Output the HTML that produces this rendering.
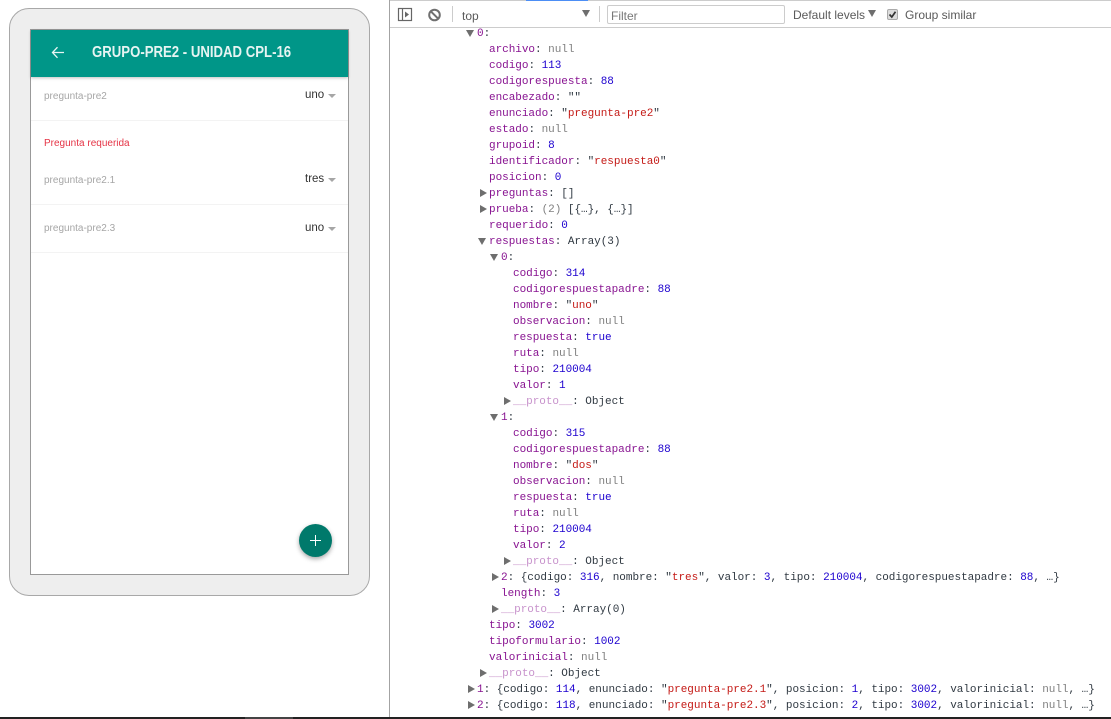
<!DOCTYPE html>
<html><head><meta charset="utf-8">
<style>
html,body{margin:0;padding:0;background:#fff;width:1111px;height:719px;overflow:hidden}
body{position:relative;font-family:"Liberation Sans",sans-serif}
.a{position:absolute}
.l{position:absolute;height:16px;line-height:16px;margin-top:1px;font-family:"Liberation Mono",monospace;font-size:11px;letter-spacing:-.03px;color:#303942;white-space:pre}
.k{color:#881391}.d{color:#c893cc}.n{color:#1c00cf}.s{color:#c41a16}.g{color:#808080}
.t{position:absolute;width:0;height:0}
.tr{border-left:7px solid #6e6e6e;border-top:4px solid transparent;border-bottom:4px solid transparent}
.td{border-top:7px solid #6e6e6e;border-left:4px solid transparent;border-right:4px solid transparent}
.q{position:absolute;left:44px;font-size:10px;color:#a6a6a6;line-height:12px;white-space:nowrap;margin-top:1px}
.v{position:absolute;font-size:11.5px;color:#333;line-height:14px;white-space:nowrap;margin-top:1px}
.c{position:absolute;left:328px;width:0;height:0;margin-top:0;border-top:4px solid #a6a6a6;border-left:4.5px solid transparent;border-right:4.5px solid transparent}
.h{position:absolute;left:31px;width:317px;height:1px;background:#f3f3f3}
.tb{position:absolute;font-size:12px;color:#5a5a5a;line-height:14px;white-space:nowrap}
</style></head>
<body>
<!-- phone -->
<div class="a" style="left:9px;top:8px;width:359px;height:586px;background:#eee;border:1px solid #a8a8a8;border-radius:20px"></div>
<div class="a" style="left:30px;top:29px;width:317px;height:544px;background:#fff;border:1px solid #999"></div>
<div class="a" style="left:31px;top:30px;width:317px;height:47px;background:#009688;box-shadow:0 1px 3px rgba(0,0,0,.25)"></div>
<svg class="a" style="left:51px;top:46px" width="14" height="14" viewBox="0 0 14 14"><path d="M13 6.500H2M6.500 1.200L1.500 6.500L6.500 11.800" fill="none" stroke="#e8f5f3" stroke-width="1.300"/></svg>
<div class="a" style="left:92px;top:44px;font-size:15.5px;font-weight:bold;color:#e6f4f2;line-height:18px;white-space:nowrap;transform-origin:0 0;transform:scaleX(.85)">GRUPO-PRE2 - UNIDAD CPL-16</div>
<div class="q" style="top:90px">pregunta-pre2</div>
<div class="v" style="left:305px;top:87px">uno</div><div class="c" style="top:94px"></div>
<div class="h" style="top:120px"></div>
<div class="a" style="left:44px;top:138px;font-size:10px;color:#e53345;line-height:12px">Pregunta requerida</div>
<div class="q" style="top:174px">pregunta-pre2.1</div>
<div class="v" style="left:305px;top:171px">tres</div><div class="c" style="top:178px"></div>
<div class="h" style="top:204px"></div>
<div class="q" style="top:222px">pregunta-pre2.3</div>
<div class="v" style="left:305px;top:220px">uno</div><div class="c" style="top:227px"></div>
<div class="h" style="top:252px"></div>
<div class="a" style="left:299px;top:524px;width:33px;height:33px;border-radius:50%;background:#00796b;box-shadow:0 2px 5px rgba(0,0,0,.35)"></div>
<div class="a" style="left:310px;top:540px;width:11px;height:1.4px;background:#fff"></div>
<div class="a" style="left:315px;top:535px;width:1.4px;height:11px;background:#fff"></div>

<!-- devtools -->
<div class="a" style="left:389px;top:0;width:1px;height:717px;background:#a3a3a3"></div>
<div class="a" style="left:390px;top:0;width:721px;height:1px;background:#ccc"></div>
<div class="a" style="left:526px;top:0;width:62px;height:1px;background:#4c8ef5"></div>
<div class="a" style="left:390px;top:27px;width:721px;height:1px;background:#ccc"></div>
<svg class="a" style="left:397px;top:7px" width="48" height="15" viewBox="0 0 48 15">
<rect x="1.500" y="1.500" width="13" height="12" fill="none" stroke="#666" stroke-width="1.200"/><path d="M5.500 1.500V13.500" stroke="#666" stroke-width="1.200"/><path d="M8 4.500L12 7.500L8 10.500Z" fill="#666"/>
<circle cx="37.500" cy="8" r="5.300" fill="none" stroke="#707070" stroke-width="2"/><path d="M33.800 4.300L41.200 11.700" stroke="#707070" stroke-width="2"/>
</svg>
<div class="a" style="left:452px;top:6px;width:1px;height:16px;background:#ccc"></div>
<div class="tb" style="left:462px;top:9px">top</div>
<div class="t td" style="left:582px;top:10px;border-top-width:7px"></div>
<div class="a" style="left:599px;top:6px;width:1px;height:16px;background:#ccc"></div>
<div class="a" style="left:607px;top:5px;width:176px;height:17px;border:1px solid #ccc;border-radius:2px"></div>
<div class="tb" style="left:611px;top:9px;color:#777">Filter</div>
<div class="tb" style="left:793px;top:8px">Default levels</div>
<div class="t td" style="left:868px;top:10px"></div>
<div class="a" style="left:887px;top:9px;width:9px;height:9px;background:#ddd;border:1px solid #aaa;border-radius:2px"></div>
<svg class="a" style="left:887px;top:9px" width="11" height="11" viewBox="0 0 11 11"><path d="M2.500 5.500L4.800 8L8.500 2.800" fill="none" stroke="#333" stroke-width="1.700"/></svg>
<div class="tb" style="left:905px;top:8px">Group similar</div>

<div class="t td" style="left:466px;top:30px"></div><div class="l" style="left:477px;top:25px"><span class="k">0</span>:</div>
<div class="l" style="left:489px;top:41px"><span class="k">archivo</span>: <span class="g">null</span></div>
<div class="l" style="left:489px;top:57px"><span class="k">codigo</span>: <span class="n">113</span></div>
<div class="l" style="left:489px;top:73px"><span class="k">codigorespuesta</span>: <span class="n">88</span></div>
<div class="l" style="left:489px;top:89px"><span class="k">encabezado</span>: ""</div>
<div class="l" style="left:489px;top:105px"><span class="k">enunciado</span>: "<span class="s">pregunta-pre2</span>"</div>
<div class="l" style="left:489px;top:121px"><span class="k">estado</span>: <span class="g">null</span></div>
<div class="l" style="left:489px;top:137px"><span class="k">grupoid</span>: <span class="n">8</span></div>
<div class="l" style="left:489px;top:153px"><span class="k">identificador</span>: "<span class="s">respuesta0</span>"</div>
<div class="l" style="left:489px;top:169px"><span class="k">posicion</span>: <span class="n">0</span></div>
<div class="t tr" style="left:480px;top:189px"></div><div class="l" style="left:489px;top:185px"><span class="k">preguntas</span>: []</div>
<div class="t tr" style="left:480px;top:205px"></div><div class="l" style="left:489px;top:201px"><span class="k">prueba</span>: <span class="g">(2)</span> [{…}, {…}]</div>
<div class="l" style="left:489px;top:217px"><span class="k">requerido</span>: <span class="n">0</span></div>
<div class="t td" style="left:478px;top:238px"></div><div class="l" style="left:489px;top:233px"><span class="k">respuestas</span>: Array(3)</div>
<div class="t td" style="left:490px;top:254px"></div><div class="l" style="left:501px;top:249px"><span class="k">0</span>:</div>
<div class="l" style="left:513px;top:265px"><span class="k">codigo</span>: <span class="n">314</span></div>
<div class="l" style="left:513px;top:281px"><span class="k">codigorespuestapadre</span>: <span class="n">88</span></div>
<div class="l" style="left:513px;top:297px"><span class="k">nombre</span>: "<span class="s">uno</span>"</div>
<div class="l" style="left:513px;top:313px"><span class="k">observacion</span>: <span class="g">null</span></div>
<div class="l" style="left:513px;top:329px"><span class="k">respuesta</span>: <span class="n">true</span></div>
<div class="l" style="left:513px;top:345px"><span class="k">ruta</span>: <span class="g">null</span></div>
<div class="l" style="left:513px;top:361px"><span class="k">tipo</span>: <span class="n">210004</span></div>
<div class="l" style="left:513px;top:377px"><span class="k">valor</span>: <span class="n">1</span></div>
<div class="t tr" style="left:504px;top:397px"></div><div class="l" style="left:513px;top:393px"><span class="d">__proto__</span>: Object</div>
<div class="t td" style="left:490px;top:414px"></div><div class="l" style="left:501px;top:409px"><span class="k">1</span>:</div>
<div class="l" style="left:513px;top:425px"><span class="k">codigo</span>: <span class="n">315</span></div>
<div class="l" style="left:513px;top:441px"><span class="k">codigorespuestapadre</span>: <span class="n">88</span></div>
<div class="l" style="left:513px;top:457px"><span class="k">nombre</span>: "<span class="s">dos</span>"</div>
<div class="l" style="left:513px;top:473px"><span class="k">observacion</span>: <span class="g">null</span></div>
<div class="l" style="left:513px;top:489px"><span class="k">respuesta</span>: <span class="n">true</span></div>
<div class="l" style="left:513px;top:505px"><span class="k">ruta</span>: <span class="g">null</span></div>
<div class="l" style="left:513px;top:521px"><span class="k">tipo</span>: <span class="n">210004</span></div>
<div class="l" style="left:513px;top:537px"><span class="k">valor</span>: <span class="n">2</span></div>
<div class="t tr" style="left:504px;top:557px"></div><div class="l" style="left:513px;top:553px"><span class="d">__proto__</span>: Object</div>
<div class="t tr" style="left:492px;top:573px"></div><div class="l" style="left:501px;top:569px"><span class="k">2</span>: {codigo: <span class="n">316</span>, nombre: "<span class="s">tres</span>", valor: <span class="n">3</span>, tipo: <span class="n">210004</span>, codigorespuestapadre: <span class="n">88</span>, …}</div>
<div class="l" style="left:501px;top:585px"><span class="k">length</span>: <span class="n">3</span></div>
<div class="t tr" style="left:492px;top:605px"></div><div class="l" style="left:501px;top:601px"><span class="d">__proto__</span>: Array(0)</div>
<div class="l" style="left:489px;top:617px"><span class="k">tipo</span>: <span class="n">3002</span></div>
<div class="l" style="left:489px;top:633px"><span class="k">tipoformulario</span>: <span class="n">1002</span></div>
<div class="l" style="left:489px;top:649px"><span class="k">valorinicial</span>: <span class="g">null</span></div>
<div class="t tr" style="left:480px;top:669px"></div><div class="l" style="left:489px;top:665px"><span class="d">__proto__</span>: Object</div>
<div class="t tr" style="left:468px;top:685px"></div><div class="l" style="left:477px;top:681px"><span class="k">1</span>: {codigo: <span class="n">114</span>, enunciado: "<span class="s">pregunta-pre2.1</span>", posicion: <span class="n">1</span>, tipo: <span class="n">3002</span>, valorinicial: <span class="g">null</span>, …}</div>
<div class="t tr" style="left:468px;top:701px"></div><div class="l" style="left:477px;top:697px"><span class="k">2</span>: {codigo: <span class="n">118</span>, enunciado: "<span class="s">pregunta-pre2.3</span>", posicion: <span class="n">2</span>, tipo: <span class="n">3002</span>, valorinicial: <span class="g">null</span>, …}</div>

<div class="a" style="left:0;top:717px;width:1111px;height:2px;background:#222"></div>
<div class="a" style="left:245px;top:717px;width:48px;height:2px;background:#444"></div>
</body></html>
